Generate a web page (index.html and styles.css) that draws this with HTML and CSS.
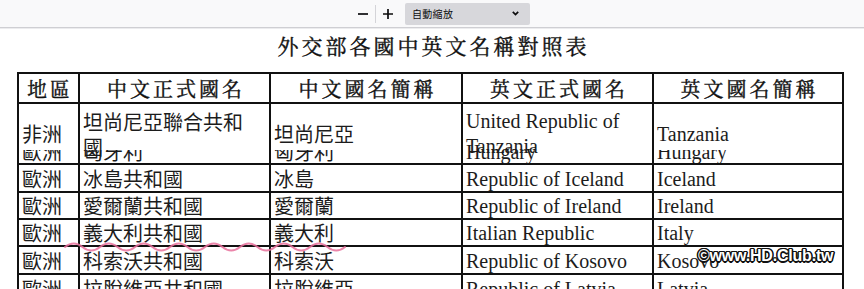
FILE: index.html
```html
<!DOCTYPE html>
<html lang="zh-Hant">
<head>
<meta charset="utf-8">
<title>外交部各國中英文名稱對照表</title>
<link rel="stylesheet" href="styles.css">
</head>
<body>
<div class="toolbar">
  <div class="zoom-group">
    <button class="tb-btn" aria-label="縮小"><svg width="10" height="10" viewBox="0 0 10 10"><path d="M0 5h10" stroke="#0c0c0d" stroke-width="1.7"/></svg></button>
    <span class="tb-sep"></span>
    <button class="tb-btn" aria-label="放大"><svg width="10" height="10" viewBox="0 0 10 10"><path d="M0 5h10M5 0v10" stroke="#0c0c0d" stroke-width="1.7"/></svg></button>
    <div class="zoom-select">
      <span>自動縮放</span>
      <svg class="chev" width="7" height="5" viewBox="0 0 7 5"><path d="M0.8 0.8L3.5 3.6L6.2 0.8" fill="none" stroke="#0c0c0d" stroke-width="1.7"/></svg>
    </div>
  </div>
</div>
<main class="doc">
  <h1 class="title">外交部各國中英文名稱對照表</h1>
  <table class="names">
    <thead>
      <tr class="r-head">
        <th class="c1">地區</th>
        <th class="c2">中文正式國名</th>
        <th class="c3">中文國名簡稱</th>
        <th class="c4">英文正式國名</th>
        <th class="c5">英文國名簡稱</th>
      </tr>
    </thead>
    <tbody>
      <tr class="r-tall">
        <td class="zh stack">非洲<div class="ghost"><span>歐洲</span></div></td>
        <td class="zh stack two">坦尚尼亞聯合共和<br>國<div class="ghost"><span>匈牙利</span></div></td>
        <td class="zh stack">坦尚尼亞<div class="ghost"><span>匈牙利</span></div></td>
        <td class="en stack two">United Republic of<br>Tanzania<div class="ghost open"><span>Hungary</span></div></td>
        <td class="en stack">Tanzania<div class="ghost"><span>Hungary</span></div></td>
      </tr>
      <tr class="r28">
        <td class="zh">歐洲</td><td class="zh">冰島共和國</td><td class="zh">冰島</td>
        <td class="en">Republic of Iceland</td><td class="en">Iceland</td>
      </tr>
      <tr class="r27">
        <td class="zh">歐洲</td><td class="zh">愛爾蘭共和國</td><td class="zh">愛爾蘭</td>
        <td class="en">Republic of Ireland</td><td class="en">Ireland</td>
      </tr>
      <tr class="r27">
        <td class="zh">歐洲</td><td class="zh">義大利共和國</td><td class="zh">義大利</td>
        <td class="en">Italian Republic</td><td class="en">Italy</td>
      </tr>
      <tr class="r28">
        <td class="zh">歐洲</td><td class="zh">科索沃共和國</td><td class="zh">科索沃</td>
        <td class="en">Republic of Kosovo</td><td class="en">Kosovo</td>
      </tr>
      <tr class="r28">
        <td class="zh">歐洲</td><td class="zh">拉脫維亞共和國</td><td class="zh">拉脫維亞</td>
        <td class="en">Republic of Latvia</td><td class="en">Latvia</td>
      </tr>
      <tr class="r28">
        <td class="zh">歐洲</td><td class="zh">立陶宛共和國</td><td class="zh">立陶宛</td>
        <td class="en">Republic of Lithuania</td><td class="en">Lithuania</td>
      </tr>
    </tbody>
  </table>
  <svg class="squiggle" width="284" height="12" viewBox="0 0 284 12" aria-hidden="true"><path d="M2 6q8.75 -7 17.5 0t17.5 0t17.5 0t17.5 0t17.5 0t17.5 0t17.5 0t17.5 0t17.5 0t17.5 0t17.5 0t17.5 0t17.5 0t17.5 0t17.5 0t17.5 0" fill="none" stroke="#e8709c" stroke-width="2" stroke-linecap="round"/></svg>
  <div class="watermark">©www.HD.Club.tw</div>
</main>
</body>
</html>
```

FILE: styles.css
```css
html, body {
  margin: 0;
  padding: 0;
  overflow: hidden;
  background: #ffffff;
}

.toolbar {
  height: 27px;
  background: #f9f9fa;
  border-bottom: 1px solid #cfcfd3;
  box-shadow: 0 1px 0 #ececee;
  display: flex;
  align-items: center;
}

.zoom-group {
  display: flex;
  align-items: center;
  margin-left: 355px;
}

.tb-btn {
  width: 16px;
  height: 20px;
  padding: 0;
  border: 0;
  background: transparent;
  display: flex;
  align-items: center;
  justify-content: center;
}

.tb-sep {
  width: 1px;
  height: 18px;
  background: #d4d4d8;
  margin: 0 4px 0 4px;
}

.zoom-select {
  margin-left: 9px;
  width: 125px;
  height: 22px;
  box-sizing: border-box;
  background: #d7d7db;
  border-radius: 2px;
  display: flex;
  align-items: center;
  padding: 0 11px 0 7px;
  font: 400 10px/1 "Noto Sans CJK TC", sans-serif;
  color: #0c0c0d;
  letter-spacing: 0.3px;
}

.chev {
  margin-left: auto;
}

.doc {
  position: relative;
}

.title {
  margin: 3px 0 13px;
  font: 400 21px/28px "Noto Serif CJK TC", "Noto Sans CJK TC", serif;
  letter-spacing: 3px;
  text-indent: 3px;
  text-align: center;
  color: #111111;
  -webkit-text-stroke: 0.4px #111111;
}

.names {
  margin-left: 17px;
  width: 827px;
  box-sizing: border-box;
  table-layout: fixed;
  border-collapse: separate;
  border-spacing: 0;
  border-top: 2px solid #111111;
  border-left: 2px solid #111111;
  color: #1c1c1c;
}

.names th,
.names td {
  box-sizing: border-box;
  border-right: 2px solid #111111;
  border-bottom: 2px solid #111111;
  padding: 1px 0 0 3px;
  vertical-align: middle;
  text-align: left;
  white-space: nowrap;
  overflow: hidden;
}

.c1 { width: 61px; }
.c2 { width: 191px; }
.c3 { width: 192px; }
.c4 { width: 191px; }
.c5 { width: 190px; }

.names th {
  font: 400 20px/26px "Noto Serif CJK TC", "Noto Sans CJK TC", serif;
  letter-spacing: 3px;
  text-align: center;
  color: #111111;
  -webkit-text-stroke: 0.4px #111111;
}

.r-head { height: 30px; }
.r-tall { height: 61px; }
.r28 { height: 28px; }
.r27 { height: 27px; }

.zh {
  font: 400 20px/24px "Noto Sans CJK TC", sans-serif;
}

.en {
  font: 400 20px/24px "Liberation Serif", "Times New Roman", serif;
}

.names td.two {
  line-height: 25px;
}

.names td.stack {
  position: relative;
  overflow: visible;
}

.ghost {
  position: absolute;
  left: 3px;
  top: 46px;
  height: 13px;
  overflow: hidden;
  white-space: nowrap;
}

.ghost span {
  display: block;
  line-height: 20px;
  margin-top: -8px;
}

.ghost.open {
  top: 38px;
  height: auto;
  overflow: visible;
}

.ghost.open span {
  margin-top: 0;
}

.squiggle {
  position: absolute;
  left: 63px;
  top: 210px;
  opacity: 0.85;
}

.watermark {
  position: absolute;
  left: 698px;
  top: 216px;
  font: 700 16px/18px "Liberation Sans", Arial, sans-serif;
  letter-spacing: -0.2px;
  color: #ffffff;
  text-shadow:
    1px 0 0 #111, -1px 0 0 #111, 0 1px 0 #111, 0 -1px 0 #111,
    1px 1px 0 #111, -1px -1px 0 #111, 1px -1px 0 #111, -1px 1px 0 #111,
    1.5px 0 0 #111, -1.5px 0 0 #111, 0 1.5px 0 #111, 0 -1.5px 0 #111;
}
```
